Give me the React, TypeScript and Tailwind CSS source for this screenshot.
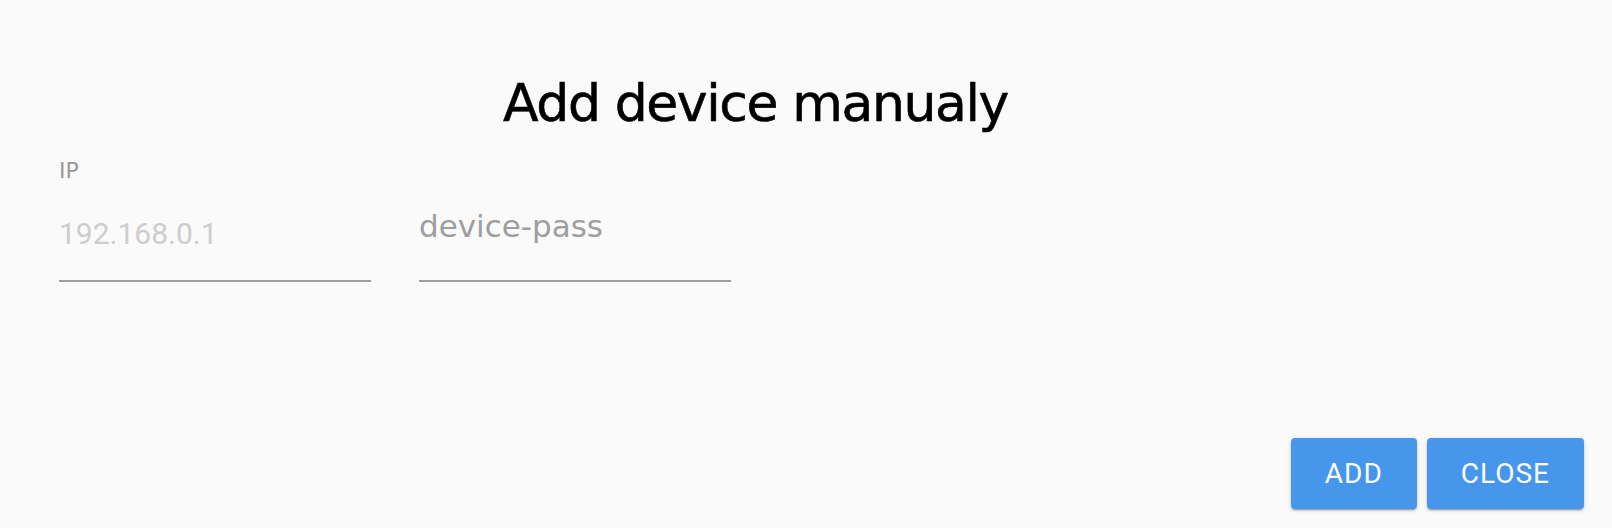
export default function App() {
    return (
        <div className="flex h-[528px] w-full flex-col bg-[#fafafa] font-['DejaVu_Sans',sans-serif]">
            {/* Title */}
            <div className="flex justify-center pt-[77px] pr-[101px]">
                <h1 className="text-[52px] leading-none tracking-[-1.4px] text-black [-webkit-text-stroke:0.6px_#000]">
                    Add device manualy
                </h1>
            </div>

            {/* Fields */}
            <div className="flex items-end gap-[48px] pt-[31px] pl-[59px]">
                <div className="flex w-[312px] flex-col">
                    <label className="text-[22px] leading-none text-[#999999]">IP</label>
                    <div className="mt-[37px] border-b-2 border-[#9e9e9e] pb-[31px]">
                        <span className="block font-['Roboto',sans-serif] text-[30px] leading-none text-[#cdcdcd]">
                            192.168.0.1
                        </span>
                    </div>
                </div>
                <div className="flex w-[312px] flex-col">
                    <div className="border-b-2 border-[#9e9e9e] pb-[38px]">
                        <span className="block text-[31px] leading-none text-[#9e9e9e]">device-pass</span>
                    </div>
                </div>
            </div>

            {/* Actions */}
            <div className="mt-auto flex justify-end gap-[10px] pr-[28px] pb-[19px]">
                <button className="h-[71px] rounded-[4px] bg-[#4696ec] px-[34px] font-['Roboto',sans-serif] text-[28px] font-normal tracking-[1px] text-white shadow-[0px_3px_1px_-2px_rgba(0,0,0,0.2),0px_2px_2px_0px_rgba(0,0,0,0.14),0px_1px_5px_0px_rgba(0,0,0,0.12)]">
                    ADD
                </button>
                <button className="h-[71px] rounded-[4px] bg-[#4696ec] px-[34px] font-['Roboto',sans-serif] text-[28px] font-normal tracking-[1px] text-white shadow-[0px_3px_1px_-2px_rgba(0,0,0,0.2),0px_2px_2px_0px_rgba(0,0,0,0.14),0px_1px_5px_0px_rgba(0,0,0,0.12)]">
                    CLOSE
                </button>
            </div>
        </div>
    )
}
